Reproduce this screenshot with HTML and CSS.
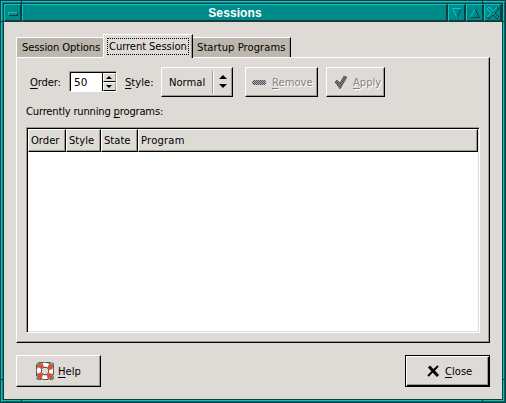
FILE: index.html
```html
<!DOCTYPE html>
<html lang="en"><head><meta charset="utf-8"><title>Sessions</title><link rel="stylesheet" href="styles.css"></head>
<body>
<div class="window">
  <i class="notch top left"></i><i class="notch top right"></i><i class="notch bottom left"></i><i class="notch bottom right"></i>
  <i class="notch side west upper"></i><i class="notch side west lower"></i><i class="notch side east lower"></i><i class="notch side east upper"></i>
  <header class="titlebar">
    <div class="control menu"><i class="dash"></i></div>
    <h1 class="title">Sessions</h1>
    <div class="control"><svg width="18" height="18" viewBox="0 0 18 18"><path d="M13.500 4.500 9 13.500" stroke="#143c3c"/><path d="M13.500 4.500H4.500L9 13.500" stroke="#00c8c8" fill="none"/></svg></div>
    <div class="control"><svg width="18" height="18" viewBox="0 0 18 18"><path d="M9 4.500 4.500 13.500" stroke="#00c8c8"/><path d="M9 4.500 13.500 13.500H4.500" stroke="#143c3c" fill="none"/></svg></div>
    <div class="control"><svg width="18" height="18" viewBox="0 0 18 18"><path d="M3 5 5 3l4 4 4-4 2 2-4 4 4 4-2 2-4-4-4 4-2-2 4-4z" fill="#008b8b" stroke="#143c3c"/><path d="M3 13l4-4-4-4 2-2 4 4 4-4" fill="none" stroke="#00c8c8"/></svg></div>
  </header>
  <main class="content">
    <nav class="tabs">
      <div class="tab first"><span>Session Options</span></div>
      <div class="tab active"><span>Current Session</span></div>
      <div class="tab final"><span>Startup Programs</span></div>
    </nav>
    <section class="panel">
      <div class="toolbar">
        <label class="order"><u>O</u>rder:</label>
        <div class="spin"><span class="value">50</span><div class="steps"><i><svg width="10" height="7"><path d="M5 2 8 5H2z"/></svg></i><i><svg width="10" height="8"><path d="M2 2h6L5 5z"/></svg></i></div></div>
        <label class="style"><u>S</u>tyle:</label>
        <div class="button option"><span>Normal</span><i class="separator"></i><svg width="8" height="14"><path d="M4 0 8 4H0zM0 9h8l-4 4z"/></svg></div>
        <div class="button remove disabled"><svg width="16" height="7" shape-rendering="crispEdges"><defs><pattern id="dots" width="2" height="2" patternUnits="userSpaceOnUse"><path d="M0 0h1v1H0zM1 1h1v1H1z" fill="#4c4e52"/></pattern></defs><path d="M2 1h12v1h1v3h-1v1H2V5H1V2h1z" fill="#aeb2ba"/><path d="M2 1h12v1h1v3h-1v1H2V5H1V2h1z" fill="url(#dots)"/></svg><span><u>R</u>emove</span></div>
        <div class="button apply disabled"><svg width="14" height="15"><path d="M1 7 3 5l3 3 4-7 3 1-7 12z" fill="#7d857b"/><path d="M1 7 3 5l3 3 4-7 3 1-7 12z" fill="url(#dots)" stroke="#3c423a" stroke-dasharray="1 1"/></svg><span><u>A</u>pply</span></div>
      </div>
      <p class="caption">Currently running <u>p</u>rograms:</p>
      <div class="list"><div class="columns"><span>Order</span><span>Style</span><span>State</span><span>Program</span></div></div>
    </section>
    <footer class="actions">
      <div class="button help"><svg width="20" height="20" viewBox="0 0 20 20"><rect x="1.500" y="1.500" width="17" height="17" rx="2" fill="#8d8b88" stroke="#555" stroke-dasharray="5 2"/><circle cx="10" cy="10" r="6" fill="#dedbd6" stroke="#444" stroke-width="5.500"/><circle cx="10" cy="10" r="6.200" fill="none" stroke="#fff" stroke-width="4"/><circle cx="10" cy="10" r="6.200" fill="none" stroke="#e64b20" stroke-width="4" stroke-dasharray="4.600 5.140" stroke-dashoffset="-2.570"/></svg><span><u>H</u>elp</span></div>
      <div class="button close"><svg width="13" height="13"><path d="M2 1.500 11 11" stroke="#000" stroke-width="3"/><path d="M11 1 1 11" stroke="#000" stroke-width="2"/></svg><span><u>C</u>lose</span></div>
    </footer>
  </main>
</div>
</body></html>
```
FILE: styles.css
```css
* { box-sizing: border-box; }
body { margin: 0; overflow: hidden; background: #dedbd6; color: #000; font: 10px/14px "DejaVu Sans", sans-serif; }
i { display: block; font-style: normal; }
u { text-decoration-thickness: 1px; text-underline-offset: 2px; }
svg { display: block; flex: none; }
.window { position: relative; width: 506px; height: 403px; border: 1px solid #143c3c; background: #008b8b; padding: 2px; box-shadow: inset 1px 1px #00c8c8, inset -1px -1px #006868, inset -2px -2px #00c8c8; }
.notch { position: absolute; background: #143c3c; width: 1px; height: 3px; }
.notch.top { top: 0; }
.notch.bottom { bottom: 0; }
.notch.left { left: 20px; }
.notch.right { right: 22px; }
.notch.side { width: 3px; height: 1px; }
.west { left: 0; }
.east { right: 0; }
.upper { top: 20px; }
.lower { bottom: 22px; }
.titlebar { display: flex; height: 19px; border: 1px solid #143c3c; border-bottom: 0; }
.control, .title { border-style: solid; border-width: 1px 2px 2px 1px; border-color: #00c8c8 #143c3c #143c3c #00c8c8; background: #008b8b; }
.control { width: 18px; height: 18px; overflow: hidden; }
.control svg { margin: -1px; }
.menu { padding: 7px 0 0 3px; }
.dash { width: 10px; height: 4px; border: 1px solid; border-color: #00c8c8 #143c3c #143c3c #00c8c8; }
.title { flex: 1; margin: 0; color: #fff; text-align: center; font: bold 12px/17px "Liberation Sans", sans-serif; letter-spacing: .1px; padding-left: 1px; }
.content { height: 378px; background: #dedbd6; border: 1px solid #143c3c; border-top: 0; padding: 12px 12px 0; }
.tabs { display: flex; align-items: flex-end; height: 23px; }
.tab { height: 20px; padding: 3px 0 0 5px; background: #bdb6ad; border-top: 1px solid #fff; white-space: nowrap; }
.first { width: 87px; border-left: 1px solid #fff; letter-spacing: -.12px; }
.active { width: 90px; height: 24px; margin-bottom: -1px; padding: 3px 2px 2px 3px; background: #dedbd6; border-left: 1px solid #fff; border-right: 1px solid #000; box-shadow: inset -1px 0 #9c9a94; letter-spacing: -.08px; position: relative; }
.active span { display: block; height: 17px; padding: 1px 0 0 1px; border: 1px dotted #000; width: 82px; }
.final { width: 98px; border-right: 1px solid #000; padding-left: 4px; box-shadow: inset -1px 0 #9c9a94; letter-spacing: .05px; }
.panel { width: 474px; height: 286px; border: 1px solid; border-color: #fff #000 #000 #fff; padding: 9px; box-shadow: inset -1px -1px #9c9a94; }
.toolbar { display: flex; height: 30px; }
.order { width: 43px; padding: 9px 0 0 4px; letter-spacing: -.15px; }
.spin { display: flex; width: 48px; height: 21px; margin-top: 4px; border: 1px solid; border-color: #9c9a94 #fff #fff #9c9a94; background: #fff; }
.value { flex: 1; padding: 2px 3px; font-size: 10.500px; border: solid #000; border-width: 1px 1px 0 1px; }
.steps { width: 13px; background: #dedbd6; border-top: 1px solid #000; }
.steps i { height: 9px; border: 1px solid; border-color: #fff #9c9a94 #000 #fff; }
.style { width: 44px; padding: 9px 0 0 8px; }
.button { display: flex; align-items: center; border: 1px solid; border-color: #fff #000 #000 #fff; box-shadow: inset -1px -1px #9c9a94; }
.button span { white-space: nowrap; padding-top: 1px; }
.option { width: 72px; padding-left: 7px; }
.separator { width: 2px; height: 23px; background: #9c9a94; border-right: 1px solid #fff; margin: 0 5px 0 7px; }
.remove { width: 73px; margin-left: 12px; padding-left: 5px; }
.remove span { margin-left: 5px; }
.apply { width: 59px; margin-left: 8px; padding-left: 7px; }
.apply span { margin-left: 5px; }
.disabled { color: #84827d; text-shadow: 1px 1px #fff; }
.caption { margin: 8px 0 8px; letter-spacing: -.2px; }
.list { height: 206px; width: 454px; background: #fff; border: 1px solid; border-color: #9c9a94 #fff #fff #9c9a94; box-shadow: inset 1px 1px #000, inset -1px -1px #dedbd6; padding: 1px; }
.columns { display: flex; height: 23px; }
.columns span { width: 36px; padding: 4px 0 0 2px; border: 1px solid; border-color: #fff #000 #000 #fff; background: #dedbd6; box-shadow: inset -1px -1px #9c9a94; }
.columns span:first-child { width: 38px; }
.columns span:nth-child(2) { width: 35px; }
.columns span:nth-child(3) { width: 37px; }
.columns span:last-child { width: 340px; letter-spacing: .2px; }
.actions { display: flex; justify-content: space-between; margin-top: 12px; width: 474px; }
.actions .button { height: 32px; width: 85px; }
.help { padding-left: 18px; }
.help span { margin-left: 3px; }
.actions .close { border: 1px solid #000; padding-left: 21px; box-shadow: inset 1px 1px #fff, inset -1px -1px #000, inset -2px -2px #9c9a94; }
.close span { margin-left: 5px; }
```
